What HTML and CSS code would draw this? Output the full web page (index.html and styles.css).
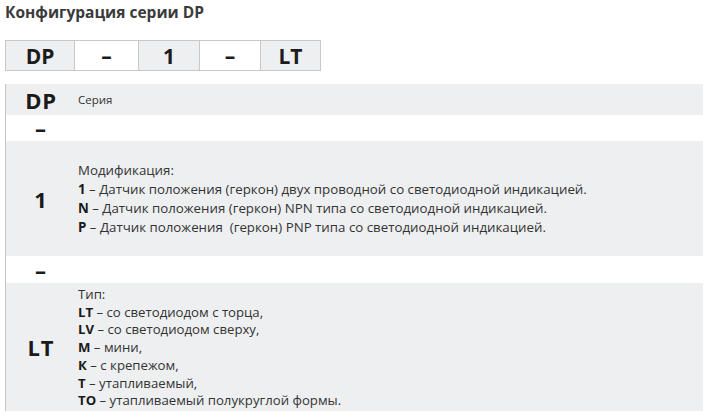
FILE: index.html
```html
<!DOCTYPE html>
<html lang="ru">
<head>
<meta charset="utf-8">
<link rel="stylesheet" href="styles.css">
</head>
<body>
<h1 class="title">Конфигурация серии DP</h1>
<div class="config">
  <div class="cell gray w1">DP</div>
  <div class="cell w2">–</div>
  <div class="cell gray w3">1</div>
  <div class="cell w4">–</div>
  <div class="cell gray w5">LT</div>
</div>
<div class="table">
  <div class="row gray r-dp">
    <div class="code">DP</div>
    <div class="desc small">Серия</div>
  </div>
  <div class="row r-dash">
    <div class="code dash">–</div>
    <div class="desc"></div>
  </div>
  <div class="row gray r-mod">
    <div class="code">1</div>
    <div class="desc">
      <div>Модификация:</div>
      <div><b>1</b> – Датчик положения (геркон) двух проводной со светодиодной индикацией.</div>
      <div><b>N</b> – Датчик положения (геркон) NPN типа со светодиодной индикацией.</div>
      <div><b>P</b> – Датчик положения&nbsp; (геркон) PNP типа со светодиодной индикацией.</div>
    </div>
  </div>
  <div class="row r-dash2">
    <div class="code dash">–</div>
    <div class="desc"></div>
  </div>
  <div class="row gray r-type">
    <div class="code">LT</div>
    <div class="desc type">
      <div>Тип:</div>
      <div><b>LT</b> – со светодиодом с торца,</div>
      <div><b>LV</b> – со светодиодом сверху,</div>
      <div><b>M</b> – мини,</div>
      <div><b>К</b> – с крепежом,</div>
      <div><b>Т</b> – утапливаемый,</div>
      <div><b>ТО</b> – утапливаемый полукруглой формы.</div>
    </div>
  </div>
</div>
</body>
</html>
```
FILE: styles.css
```css
html, body {
  margin: 0;
  padding: 0;
  background: #ffffff;
}
body {
  font-family: "Open Sans", "Noto Sans", sans-serif;
  color: #2b2b2b;
  width: 706px;
  height: 418px;
  overflow: hidden;
}
.title {
  margin: 0;
  padding: 2px 0 0 5px;
  font-size: 15.5px;
  line-height: 20px;
  font-weight: 700;
  color: #3a3a3a;
}
.config {
  display: flex;
  margin: 18px 0 0 5px;
  width: 314px;
  border: 1px solid #c8c8c8;
  height: 29px;
}
.cell {
  display: flex;
  align-items: center;
  justify-content: center;
  font-weight: 700;
  font-size: 21px;
  color: #1c1c1c;
  border-left: 1px solid #c8c8c8;
}
.cell:first-child { border-left: none; }
.gray { background: #eeeff1; }
.w1 { width: 68px; }
.w2 { width: 63px; }
.w3 { width: 60px; }
.w4 { width: 60px; }
.w5 { flex: 1; }
.table {
  margin: 13px 0 0 5px;
  width: 697px;
  border-left: 1px solid #c4c4c4;
}
.row {
  display: flex;
  align-items: center;
}
.code {
  width: 70px;
  flex: none;
  text-align: center;
  font-weight: 700;
  font-size: 22px;
  letter-spacing: 0.8px;
  color: #1a1a1a;
}
.code.dash { font-size: 22px; line-height: 22px; }
.desc {
  font-size: 13.3px;
  line-height: 19px;
  color: #333;
  padding-left: 2px;
}
.desc b { font-weight: 700; color: #1a1a1a; }
.small { font-size: 11.5px; }
.r-dp { height: 31px; }
.r-dash { height: 26px; }
.r-mod { height: 115px; }
.r-dash2 { height: 27px; }
.r-type { height: 128px; }
.type { font-size: 13.2px; line-height: 17.8px; padding-top: 2px; }
```
